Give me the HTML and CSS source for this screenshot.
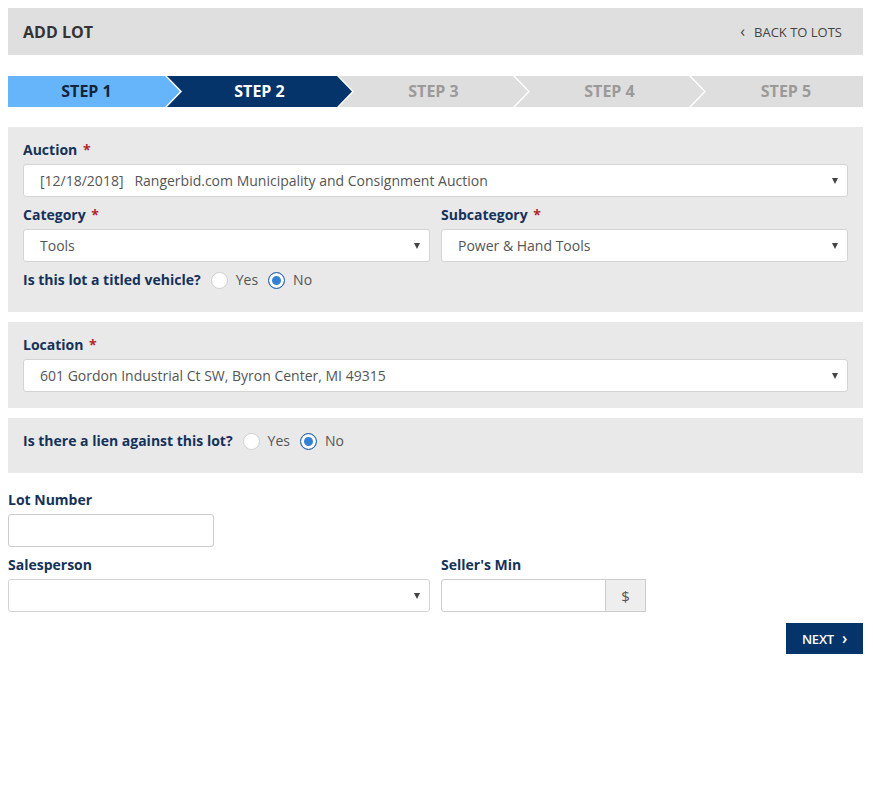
FILE: index.html
```html
<!DOCTYPE html>
<html>
<head>
<meta charset="utf-8">
<link rel="stylesheet" href="styles.css">
</head>
<body>
<div class="page">
  <div class="header">
    <div class="title">ADD LOT</div>
    <a class="back"><span class="chev">&#8249;</span>BACK TO LOTS</a>
  </div>

  <div class="steps">
    <div class="step s1 done">STEP 1</div>
    <div class="step active">STEP 2</div>
    <div class="step wide">STEP 3</div>
    <div class="step wide">STEP 4</div>
    <div class="step last">STEP 5</div>
  </div>

  <div class="panel">
    <div class="field">
      <div class="label">Auction <span class="req">*</span></div>
      <div class="select"><span>[12/18/2018]&nbsp;&nbsp; Rangerbid.com Municipality and Consignment Auction</span><i class="caret"></i></div>
    </div>
    <div class="row">
      <div class="field">
        <div class="label">Category <span class="req">*</span></div>
        <div class="select"><span>Tools</span><i class="caret"></i></div>
      </div>
      <div class="field">
        <div class="label">Subcategory <span class="req">*</span></div>
        <div class="select"><span>Power &amp; Hand Tools</span><i class="caret"></i></div>
      </div>
    </div>
    <div class="radio-row">
      <span class="label">Is this lot a titled vehicle?</span>
      <span class="radio"></span><span class="opt">Yes</span>
      <span class="radio checked"></span><span class="opt">No</span>
    </div>
  </div>

  <div class="panel">
    <div class="field">
      <div class="label">Location <span class="req">*</span></div>
      <div class="select"><span>601 Gordon Industrial Ct SW, Byron Center, MI 49315</span><i class="caret"></i></div>
    </div>
  </div>

  <div class="panel">
    <div class="radio-row">
      <span class="label">Is there a lien against this lot?</span>
      <span class="radio"></span><span class="opt">Yes</span>
      <span class="radio checked"></span><span class="opt">No</span>
    </div>
  </div>

  <div class="plain">
    <div class="field lot">
      <div class="label">Lot Number</div>
      <div class="input"></div>
    </div>
    <div class="row">
      <div class="field">
        <div class="label">Salesperson</div>
        <div class="select"><span></span><i class="caret"></i></div>
      </div>
      <div class="field">
        <div class="label">Seller's Min</div>
        <div class="group">
          <div class="input grp"></div>
          <div class="addon">$</div>
        </div>
      </div>
    </div>
    <div class="actions">
      <button class="next">NEXT <span class="nchev">&#8250;</span></button>
    </div>
  </div>
</div>
</body>
</html>
```

FILE: styles.css
```css
html, body {
  margin: 0;
  padding: 0;
  background: #fff;
}
body {
  font-family: "Open Sans", "Noto Sans", sans-serif;
  color: #555;
}
.page {
  padding: 8px 10px 8px 8px;
}
.header {
  height: 47px;
  background: #dfdfdf;
  display: flex;
  align-items: center;
  justify-content: space-between;
  padding: 0 21px 0 15px;
}
.title {
  font-size: 16px;
  font-weight: 700;
  color: #333;
}
.back {
  font-size: 13px;
  color: #444;
  display: flex;
  align-items: center;
}
.chev {
  font-size: 16px;
  margin-right: 9px;
  line-height: 1;
  position: relative;
  top: -1px;
}
.steps {
  display: flex;
  margin-top: 21px;
  height: 31px;
}
.step {
  flex: 0 0 185px;
  margin-left: -13px;
  height: 31px;
  background: #dedede;
  color: #9a9a9a;
  font-size: 16px;
  font-weight: 700;
  display: flex;
  align-items: center;
  justify-content: center;
  box-sizing: border-box;
  padding: 0 15px 1px;
  clip-path: polygon(0 0, calc(100% - 15px) 0, 100% 50%, calc(100% - 15px) 100%, 0 100%, 15px 50%);
}
.step.wide {
  flex-basis: 189px;
}
.step.s1 {
  flex-basis: 172px;
  margin-left: 0;
  padding: 0 15px 1px 0;
  clip-path: polygon(0 0, calc(100% - 15px) 0, 100% 50%, calc(100% - 15px) 100%, 0 100%);
}
.step.last {
  flex: 1 1 auto;
  padding: 0 0 1px 18px;
  clip-path: polygon(0 0, 100% 0, 100% 100%, 0 100%, 15px 50%);
}
.step.done {
  background: #66b5fa;
  color: #14243a;
}
.step.active {
  background: #05346a;
  color: #fff;
}
.panel {
  background: #e9e9e9;
  padding: 13px 15px 16px;
  margin-top: 20px;
  display: flex;
  flex-direction: column;
  gap: 8px;
}
.panel + .panel {
  margin-top: 10px;
}
.field {
  display: flex;
  flex-direction: column;
  gap: 4px;
}
.row {
  display: flex;
  gap: 11px;
}
.row > .field {
  flex: 1 1 0;
}
.label {
  font-size: 14px;
  font-weight: 700;
  color: #15325a;
  line-height: 20px;
}
.req {
  color: #b3262a;
  margin-left: 2px;
}
.select {
  height: 33px;
  box-sizing: border-box;
  background: #fff;
  border: 1px solid #d4d4d4;
  border-radius: 3px;
  display: flex;
  align-items: center;
  justify-content: space-between;
  padding: 0 9px 0 16px;
  font-size: 14px;
  color: #555;
}
.caret {
  width: 0;
  height: 0;
  border-left: 3.5px solid transparent;
  border-right: 3.5px solid transparent;
  border-top: 6px solid #444;
}
.radio-row {
  display: flex;
  align-items: center;
  line-height: 20px;
  margin-bottom: 6px;
}
.radio-row .label {
  margin-right: 10px;
}
.radio {
  width: 17px;
  height: 17px;
  box-sizing: border-box;
  border-radius: 50%;
  border: 1px solid #d0d0d0;
  background: #fff;
}
.radio.checked {
  border: 1px solid #2a64a8;
  background: #3582d4;
  box-shadow: inset 0 0 0 3px #fff;
}
.opt {
  font-size: 14px;
  color: #555;
  margin: 0 10px 0 8px;
}
.plain {
  padding-top: 17px;
  display: flex;
  flex-direction: column;
  gap: 8px;
}
.lot .input {
  width: 206px;
}
.input {
  height: 33px;
  box-sizing: border-box;
  background: #fff;
  border: 1px solid #ccc;
  border-radius: 3px;
}
.group {
  display: flex;
  height: 33px;
}
.input.grp {
  width: 165px;
  border-radius: 3px 0 0 3px;
}
.addon {
  width: 40px;
  box-sizing: border-box;
  background: #eee;
  border: 1px solid #ccc;
  border-left: none;
  display: flex;
  align-items: center;
  justify-content: center;
  font-size: 15px;
  color: #555;
}
.actions {
  display: flex;
  justify-content: flex-end;
  margin-top: 3px;
}
.next {
  width: 77px;
  height: 31px;
  background: #05346a;
  color: #fff;
  border: none;
  font-family: "Open Sans", "Noto Sans", sans-serif;
  font-size: 13px;
  font-weight: 600;
  padding: 0;
  margin: 0;
  display: flex;
  align-items: center;
  justify-content: center;
  letter-spacing: -0.2px;
}
.nchev {
  font-size: 16px;
  margin-left: 8px;
  line-height: 1;
  position: relative;
  top: -1px;
}
```
